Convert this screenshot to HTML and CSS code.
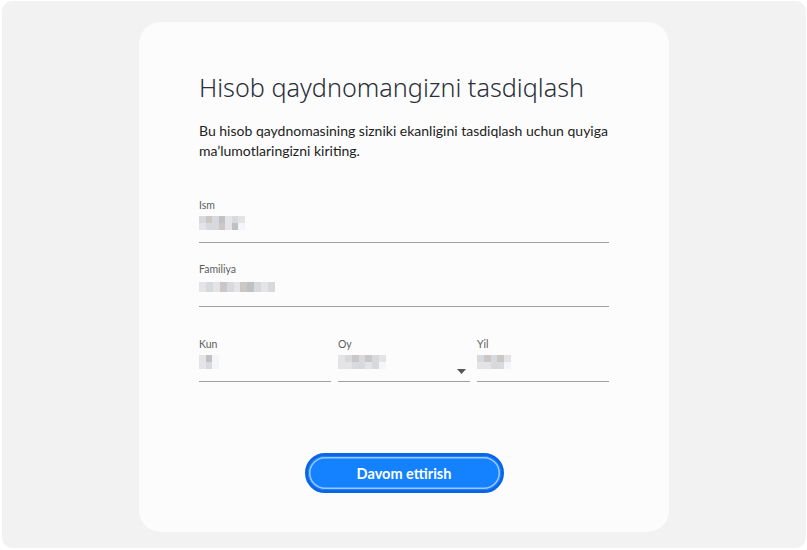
FILE: index.html
```html
<!DOCTYPE html>
<html lang="uz">
<head>
<meta charset="utf-8">
<title>Hisob qaydnomangizni tasdiqlash</title>
<link rel="stylesheet" href="styles.css">
</head>
<body>
<div class="frame">
  <main class="card">
    <h1 class="title">Hisob qaydnomangizni tasdiqlash</h1>
    <p class="lead">Bu hisob qaydnomasining sizniki ekanligini tasdiqlash uchun quyiga ma’lumotlaringizni kiriting.</p>

    <div class="field first">
      <div class="label">Ism</div>
      <div class="value">
        <span class="mosaic w46">
          <i class="c2"></i><i class="c3"></i><i class="c2"></i><i class="c4"></i><i class="c1"></i><i class="c2"></i><i class="c1"></i>
          <i class="c1"></i><i class="c2"></i><i class="c2"></i><i class="c3"></i><i class="c1"></i><i class="c4"></i><i class="c0"></i>
        </span>
      </div>
    </div>

    <div class="field">
      <div class="label">Familiya</div>
      <div class="value">
        <span class="mosaic w76 one">
          <i class="c1"></i><i class="c2"></i><i class="c1"></i><i class="c3"></i><i class="c2"></i><i class="c1"></i><i class="c3"></i><i class="c4"></i><i class="c2"></i><i class="c1"></i><i class="c2"></i>
        </span>
      </div>
    </div>

    <div class="row">
      <div class="field small">
        <div class="label">Kun</div>
        <div class="value">
          <span class="mosaic w20 two">
            <i class="c1"></i><i class="c4"></i><i class="c0"></i>
            <i class="c1"></i><i class="c2"></i><i class="c0"></i>
          </span>
        </div>
      </div>
      <div class="field small">
        <div class="label">Oy</div>
        <div class="value select">
          <span class="mosaic w48">
            <i class="c1"></i><i class="c2"></i><i class="c3"></i><i class="c2"></i><i class="c3"></i><i class="c2"></i><i class="c1"></i>
            <i class="c1"></i><i class="c1"></i><i class="c2"></i><i class="c2"></i><i class="c1"></i><i class="c2"></i><i class="c0"></i>
          </span>
          <svg class="caret" width="9" height="5" viewBox="0 0 9 5"><path d="M0 0H9L4.5 5Z" fill="#555"/></svg>
        </div>
      </div>
      <div class="field small">
        <div class="label">Yil</div>
        <div class="value">
          <span class="mosaic w34 five">
            <i class="c2"></i><i class="c3"></i><i class="c2"></i><i class="c3"></i><i class="c1"></i>
            <i class="c1"></i><i class="c1"></i><i class="c2"></i><i class="c2"></i><i class="c0"></i>
          </span>
        </div>
      </div>
    </div>

    <div class="actions">
      <button class="btn" type="button">Davom ettirish</button>
    </div>
  </main>
</div>
</body>
</html>
```

FILE: styles.css
```css
* { box-sizing: border-box; }
html, body {
  margin: 0;
  background: #ffffff;
  font-family: Lato, "Noto Sans", "Liberation Sans", sans-serif;
  color: #252525;
}
.frame {
  margin: 1px 1px 0 2px;
  height: 547px;
  background: #f2f2f2;
  border-radius: 10px;
  display: flex;
  justify-content: center;
  align-items: flex-start;
  padding-top: 21px;
}
.card {
  width: 530px;
  height: 510px;
  background: #fcfcfc;
  border-radius: 22px;
  padding: 47px 60px 0 60px;
  display: flex;
  flex-direction: column;
}
.title {
  margin: 0;
  font-family: "Noto Sans", "Open Sans", sans-serif;
  font-size: 25.2px;
  line-height: 36px;
  font-weight: 300;
  color: #2a2f3a;
}
.lead {
  margin: 16px 0 0 0;
  font-size: 14px;
  line-height: 20px;
  color: #222;
}
.field {
  margin-top: 20px;
  border-bottom: 1px solid #a0a0a0;
}
.field.first { margin-top: 38px; }
.label {
  font-size: 10.5px;
  line-height: 13px;
  color: #5e5e5e;
}
.value {
  height: 30px;
  padding-top: 4px;
  display: flex;
  align-items: flex-start;
}
.mosaic {
  display: grid;
  grid-template-columns: repeat(7, 1fr);
  grid-auto-rows: 7px;
  filter: blur(0.3px);
}
.mosaic.one { grid-template-columns: repeat(11, 1fr); grid-auto-rows: 10px; margin-top: 2px; }
.mosaic.two { grid-template-columns: repeat(3, 1fr); }
.mosaic.five { grid-template-columns: repeat(5, 1fr); }
.w46 { width: 46px; }
.w76 { width: 76px; }
.w20 { width: 20px; }
.w48 { width: 48px; }
.w34 { width: 34px; }
.c0 { background: #f3f5f8; }
.c1 { background: #e4e4e6; }
.c2 { background: #d8d9dc; }
.c3 { background: #cbc7c6; }
.c4 { background: #bfc1c3; }
.row {
  margin-top: 11px;
  display: grid;
  grid-template-columns: repeat(3, 1fr);
  gap: 7px;
}
.row .field { margin-top: 20px; }
.row .value { height: 30px; }
.select { justify-content: space-between; }
.caret { margin: 14px 4px 0 0; }
.actions {
  margin-top: 71px;
  display: flex;
  justify-content: center;
}
.btn {
  width: 199px;
  height: 40px;
  border-radius: 20px;
  border: 3px solid #0a66e6;
  background: #1482ff;
  box-shadow: inset 0 0 0 1px #1482ff, inset 0 0 0 2.5px #9cc8ff;
  color: #ffffff;
  font-family: Lato, "Noto Sans", sans-serif;
  font-size: 14.5px;
  font-weight: 700;
  padding: 0;
  cursor: pointer;
}
```
